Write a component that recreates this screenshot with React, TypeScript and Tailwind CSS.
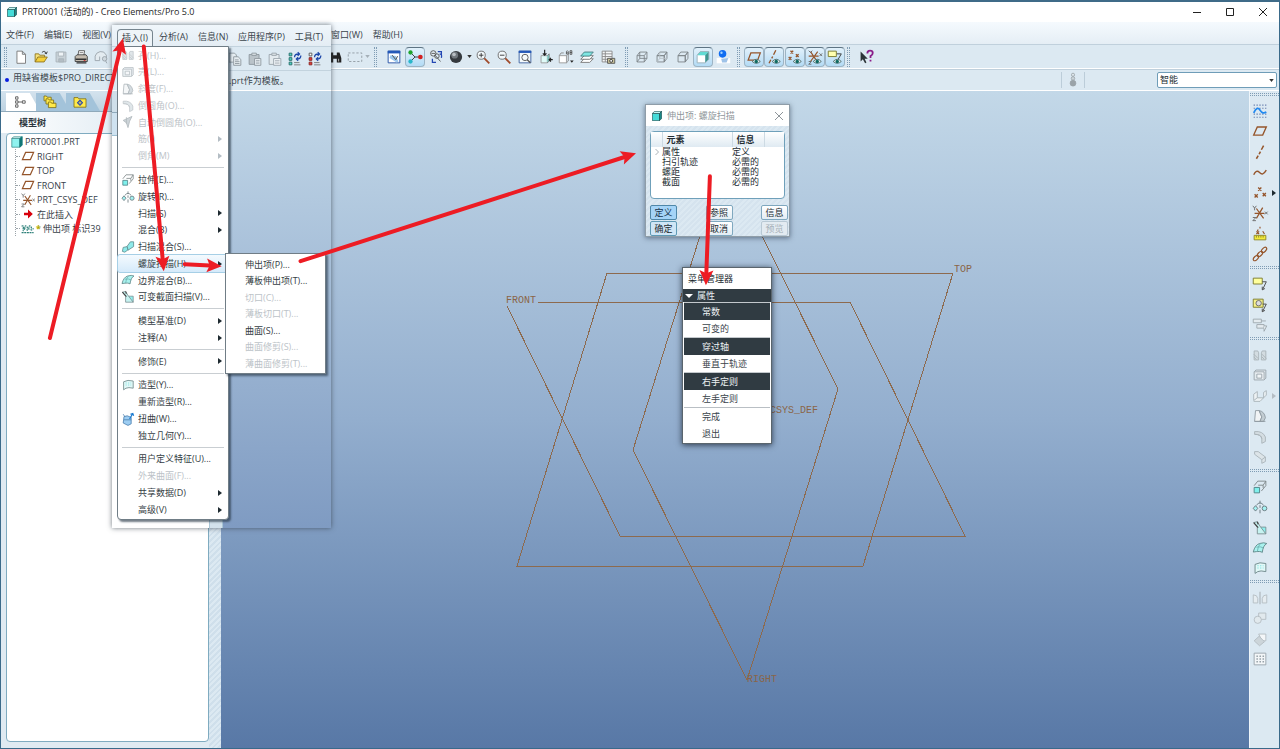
import React from "react";

const FONT = "font-['Open_Sans','Noto_Sans_CJK_SC',sans-serif]";
const B = "#95552b";
const G = "#a9b3ba";
const C = "#7fe0e0";

type IconMap = Record<string, React.ReactNode>;

const eye = (
  <g>
    <path d="M8 15q4.500-5 9 0q-4.500 4-9 0z" fill="#e8f2f2" stroke="#4d6a6a" />
    <circle cx="12.500" cy="15" r="1.900" fill="#0f6a62" />
  </g>
);
const wave = "M3 13C5 9 7 8 9.500 10.500S14 13 17 8";

const cube = (stroke: string, fill = "none", top = "none", side = "none") => (
  <g stroke={stroke} strokeLinejoin="round">
    <path d="M4.500 8.500h8v7h-8z" fill={fill} />
    <path d="M4.500 8.500l3-4h8l-3 4z" fill={top} />
    <path d="M12.500 8.500l3-4v7l-3 4z" fill={side} />
  </g>
);

const ICONS: IconMap = {
  fresh: <path d="M5.500 3.500h6l3.500 3.500v10h-9.500zM11.500 3.500v3.500h3.500" fill="#fff" stroke="#777" />,
  open: (
    <g>
      <path d="M3.500 15.500v-9h4l1 1.500h5.500v3" fill="#f6e27a" stroke="#8d7420" />
      <path d="M3.500 15.500l3-5.500h10.500l-3.500 5.500z" fill="#f4cf3a" stroke="#8d7420" />
      <path d="M11 5q3-3 5 1m1-2l-1 2.500-2-1" stroke="#333" />
    </g>
  ),
  save: (
    <g stroke={G}>
      <path d="M4.500 4.500h11v11h-11z" fill="#c9d2d8" />
      <path d="M7 4.500h6v4.500h-6z" fill="#eef3f6" />
      <path d="M7.500 12h5.500v3.500h-5.500z" fill="#b3bdc4" />
    </g>
  ),
  print: (
    <g>
      <path d="M6.500 9l1-6h6.500l-1 6z" fill="#fff" stroke="#555" />
      <path d="M3.500 9.500l2-2h10l1.500 2v5.500h-13.500z" fill="#c4bcb0" stroke="#3d3d3d" />
      <path d="M4 12.500h12M5 16.500h11" stroke="#333" strokeWidth="1.500" />
      <path d="M8.500 5h4M8 7h4" stroke="#888" />
      <path d="M13 14h2" stroke="#c22" />
    </g>
  ),
  mail: (
    <g stroke="#9aa4ab">
      <path d="M3.500 14v-5q1-4 5.500-5t7 4v4" fill="#e3ebf0" />
      <path d="M3.500 14h5v-4.500" />
      <circle cx="14" cy="12" r="2.500" fill="#cfd8de" />
      <path d="M15 14l1.500 3" />
    </g>
  ),
  copy: (
    <g stroke="#8d979e" fill="#e6edf1">
      <path d="M3.500 3.500h6l2 2v8h-8z" />
      <path d="M8.500 7.500h5l3 3v6.500h-8zM10 11h4M10 13h5M10 15h5" />
    </g>
  ),
  paste: (
    <g stroke="#8d979e">
      <path d="M3.500 5h11v11h-11z" fill="#bac3c9" />
      <path d="M6.500 3.500h5v2.500h-5z" fill="#dce3e7" />
      <path d="M9.500 9.500h7v7.500h-7zM11 12h4M11 14.500h4" fill="#e8eff3" />
    </g>
  ),
  paste2: (
    <g stroke="#9aa4ab">
      <path d="M3.500 5h11v11h-11z" fill="#e3eaee" />
      <path d="M6.500 3.500h5v2.500h-5z" fill="#dce3e7" />
      <path d="M8.500 9.500h8v7.500h-8zM10 12h5M10 14.500h5" fill="#f1f5f8" />
    </g>
  ),
  regen: (
    <g>
      <path d="M3.500 3.500h3v3h-3zM3.500 8.500h3v3h-3zM3.500 13.500h3v3h-3z" fill="#4fd4c4" stroke="#226a66" />
      <path d="M9 14h6M9 16.500h7" stroke="#777" />
      <path d="M9.500 8q0-4 5-3.500m-1.500-2l2 2-2 2M16.500 6q0 4-4.500 4m1.500-2l-2 2 2 2" stroke="#1c46a8" strokeWidth="1.400" />
    </g>
  ),
  regen2: (
    <g>
      <path d="M3.500 3.500h3v3h-3z" fill="#fff" stroke="#555" />
      <path d="M3.500 8.500h3v3h-3zM3.500 13.500h3v3h-3z" fill="#e23b34" stroke="#8a2420" />
      <path d="M9 14h6M9 16.500h7" stroke="#777" />
      <path d="M9.500 8q0-4 5-3.500m-1.500-2l2 2-2 2M16.500 6q0 4-4.500 4m1.500-2l-2 2 2 2" stroke="#1c46a8" strokeWidth="1.400" />
    </g>
  ),
  find: (
    <g fill="#222">
      <path d="M5 5h3v3h4V5h3l2 6v5h-5v-4H8v4H3v-5z" />
      <path d="M5 12v3M14 12v3" stroke="#bbb" />
    </g>
  ),
  marquee: <path d="M2.500 5.500h15v9.500h-15z" stroke="#8f9aa2" strokeDasharray="2.500 2" />,
  repaint: (
    <g>
      <path d="M3.500 3.500h13v13h-13z" fill="#fff" stroke="#1d4ba3" />
      <path d="M3 3h14v3H3z" fill="#2458b8" />
      <path d="M6 8l6 1 3 6-2 1-8-5z" fill="#9cc8ee" />
      <path d="M8 8l4 5 2-4" stroke="#444" />
    </g>
  ),
  spin: (
    <g>
      <path d="M5 5l5 5h6M10 10l-5 5" stroke="#333" />
      <circle cx="5" cy="5" r="2.400" fill="#1fa32c" />
      <circle cx="16" cy="10" r="2.600" fill="#d42020" />
      <circle cx="5" cy="15" r="2.400" fill="#29b7c9" />
    </g>
  ),
  orient: (
    <g stroke="#555">
      <circle cx="7" cy="6" r="3" fill="#e5eef4" />
      <path d="M5 6h4M9 8l6 7" />
      <circle cx="11" cy="9" r="2.500" />
      <path d="M12 4h4v4M6 12v4h4M14 7q3-1 2 4" stroke="#2447b3" strokeWidth="1.400" />
    </g>
  ),
  sphere: (
    <g>
      <circle cx="10" cy="10" r="6.800" fill="#353a3f" />
      <circle cx="8.500" cy="8" r="3.800" fill="#70777d" />
      <circle cx="7.800" cy="7.300" r="2" fill="#b9bfc4" />
    </g>
  ),
  zin: (
    <g>
      <path d="M11 11l6 6" stroke="#a04a2a" strokeWidth="2" />
      <circle cx="8" cy="8" r="4.500" fill="#f2f8fb" stroke="#666" />
      <path d="M5.500 8h5M8 5.500v5" stroke="#333" />
    </g>
  ),
  zout: (
    <g>
      <path d="M11 11l6 6" stroke="#a04a2a" strokeWidth="2" />
      <circle cx="8" cy="8" r="4.500" fill="#f2f8fb" stroke="#666" />
      <path d="M5.500 8h5" stroke="#333" />
    </g>
  ),
  refit: (
    <g>
      <path d="M3.500 3.500h13v13h-13z" fill="#f5fafc" stroke="#3a5f9e" />
      <path d="M3 3h14v2.500H3z" fill="#2458b8" />
      <circle cx="10" cy="10.500" r="3.500" stroke="#555" />
      <path d="M12.500 13l3.500 3.500" stroke="#555" strokeWidth="1.500" />
    </g>
  ),
  reorient: (
    <g>
      <path d="M4.500 8.500h7v8h-7z" fill="#dffaf8" stroke="#999" />
      <path d="M11.500 8.500l2-2v8l-2 2" fill="#7fd9d2" stroke="#777" />
      <path d="M8.500 2v6M6.500 6l2 2 2-2M17.500 13h-4M15.500 11l-2 2 2 2" stroke="#222" strokeWidth="1.300" />
    </g>
  ),
  views: (
    <g>
      <path d="M2.500 8.500h8v8h-8z" fill="#fff" stroke="#999" />
      <path d="M2.500 8.500l2-3h3M10.500 8.500l2-2v8l-2 2" stroke="#888" />
      <path d="M10.500 7V4q1-2 2 0v3M10.500 5.500h2M14.500 3v4h2V5h-2h2V3z" stroke="#555" />
      <path d="M14.500 14h4l-2 2.500z" fill="#222" />
    </g>
  ),
  layers: (
    <g stroke="#777">
      <path d="M3 16l4-4h10l-4 4z" fill="#fff" />
      <path d="M3 12.500l4-4h10l-4 4z" fill="#fff" />
      <path d="M3 9l4-4.500h10L13 9z" fill="#7fe6e2" stroke="#457d80" />
    </g>
  ),
  viewmgr: (
    <g stroke="#888">
      <path d="M3.500 3.500h11v12h-11zM3.500 6.500h11M3.500 9.500h11M3.500 12.500h11M7 3.500v12" fill="#f5f7f8" />
      <path d="M9.500 11.500h8v5.500h-8z" fill="#cbc59b" stroke="#555" />
      <circle cx="13.500" cy="14.300" r="1.600" stroke="#333" fill="#fff" />
    </g>
  ),
  wire: (
    <g stroke="#7d8589">
      <path d="M4.500 8.500h8v7h-8zM7.500 4.500h8v7h-8zM4.500 8.500l3-4M12.500 8.500l3-4M12.500 15.500l3-4M4.500 15.500l3-4" />
    </g>
  ),
  hidden: (
    <g stroke="#7d8589">
      {cube("#7d8589")}
      <path d="M7.500 4.500v7h8M4.500 15.500l3-4" stroke="#b7c0c5" />
    </g>
  ),
  nohidden: cube("#7d8589"),
  shade: (
    <g strokeLinejoin="round">
      <path d="M3.500 8h9v8.500h-9z" fill="#fff" />
      <path d="M3.500 8l3.500-4h9.500l-4 4z" fill="#5fdcd4" />
      <path d="M12.500 8l4-4v8.500l-4 4z" fill="#3f9690" />
      <path d="M3.500 16.500V8L7 4h9.500v8.500l-4 4z" stroke="#9ab0b8" />
    </g>
  ),
  realism: (
    <g>
      <path d="M3 11h15v6H3z" fill="#fff" />
      <path d="M8 12l8-1-2 5H9z" fill="#9fc3e8" />
      <circle cx="9.500" cy="6.500" r="4.200" fill="#0f6cf2" />
      <circle cx="8.300" cy="5.300" r="1.300" fill="#9fd0ff" />
    </g>
  ),
  dplane: (<g><path d="M6.500 5.500h10.500l-3 8H3.500z" stroke={B} strokeWidth="1.400" />{eye}</g>),
  daxis: (<g><path d="M12 2.500l-2.500 5M8.500 9.500l-1 2M6.500 13l-2 4" stroke={B} strokeWidth="1.500" />{eye}</g>),
  dpoint: (<g><path d="M5 3l3 3m0-3l-3 3M11 7l3 3m0-3l-3 3M3 10l3 3m0-3l-3 3" stroke={B} strokeWidth="1.500" />{eye}</g>),
  dcsys: (
    <g>
      <path d="M3 9h11M5 4l8 12M13 4L5 15" stroke={B} strokeWidth="1.300" />
      <path d="M3 3l2 2 2-2M3 15h3l-3 3h3M15 6l3 3m0-3l-3 3" stroke="#666" />
      {eye}
    </g>
  ),
  dnote: (<g><path d="M2.500 3.500h9v6h-9z" fill="#ffffb0" stroke="#77772a" /><path d="M12 6.500h5l-4 7" stroke="#333" />{eye}</g>),
  help: (
    <g>
      <path d="M4 4v11l2.500-2.500L9 17l1.500-1-2-4h3.500z" fill="#2b3438" />
      <path d="M11.500 6q0-3 3-3t3 2.500q0 2-2.500 3.500v2M15 13v2" stroke="#8a1d8a" strokeWidth="2" />
    </g>
  ),
  thermo: (
    <g stroke="#9aa3a8">
      <circle cx="10" cy="3.500" r="2" fill="#dce5ea" />
      <circle cx="10" cy="8" r="2.200" fill="#cbd4d9" />
      <circle cx="10" cy="14" r="3.600" fill="#9aa3a8" />
    </g>
  ),
  sketch: (
    <g>
      <path d="M3 3.500h14M3 7h14M3 13.500h14M3 17h14" stroke="#5069a0" strokeWidth="1.200" strokeDasharray="1.200 2" />
      <path d="M3 12q4-8 7-3t7 2" stroke="#2289f0" strokeWidth="2" />
    </g>
  ),
  plane: <path d="M7 5.500h10l-4 9H3z" stroke={B} strokeWidth="1.500" />,
  axis: <path d="M14 3l-2.500 4.500M10.500 9.500l-1.500 3M8 14l-2 3.500" stroke={B} strokeWidth="1.700" />,
  curve: <path d={wave} stroke={B} strokeWidth="1.600" />,
  points: <path d="M8 4l3.500 3.500m0-3.500l-3.500 3.500M13 10l3.500 3.500m0-3.500l-3.500 3.500M4 11.500l3.500 3.500m0-3.500l-3.500 3.500" stroke={B} strokeWidth="1.500" />,
  csys: (
    <g>
      <path d="M4 10.500h11M6 5l8 11M13 4L6 16" stroke={B} strokeWidth="1.400" />
      <path d="M2 2l2 2.500L6 2M4 4.500V7M2 15h3.500L2 18.500h3.500M15.500 8.500l3 3m0-3l-3 3" stroke="#666" />
    </g>
  ),
  analysis: (
    <g>
      <path d="M10 2v2M8 5l-1 2M6 7l3 3m0-3l-3 3M13 7l2 3" stroke={B} strokeWidth="1.300" />
      <path d="M3.500 11.500h13v5h-13z" fill="#f4ec3c" stroke="#8b8428" />
      <path d="M6 12v2M8.500 12v2M11 12v2M13.500 12v2" stroke="#8b8428" />
    </g>
  ),
  chain: (
    <g stroke={B} strokeWidth="1.300">
      <ellipse cx="5.500" cy="14.500" rx="3.600" ry="2" transform="rotate(-45 5.500 14.500)" />
      <ellipse cx="10" cy="10" rx="3.600" ry="2" transform="rotate(-45 10 10)" />
      <ellipse cx="14.500" cy="5.500" rx="3.600" ry="2" transform="rotate(-45 14.500 5.500)" />
    </g>
  ),
  note: (<g><path d="M2.500 3.500h10v6.500h-10z" fill="#ffff9c" stroke="#77772a" /><path d="M12.500 7.500h4.500l-4 8.500m-.5-3v3.500l3-1.500" stroke="#444" /></g>),
  note2: (
    <g>
      <path d="M2.500 3.500h11v9h-11z" fill="#f5f087" stroke="#77772a" />
      <circle cx="8.500" cy="8" r="3" fill="#ddd" stroke="#666" />
      <path d="M13 9h4l-4 8m-.5-3v3.500l3-1.500" stroke="#444" />
    </g>
  ),
  note3: (<g stroke="#9da7ad" fill="#e4ebef"><path d="M2.500 3.500h9v4h-9zM6.500 9.500h8v4h-8z" /><path d="M11.500 5.500h5M14.500 11h3l-3 6m0-3v3" /></g>),
  hole: (<g stroke="#a9b3b9"><path d="M3.500 5.500h4l1 2v8h-5zM16.500 5.500h-4l-1 2v8h5z" fill="#d3dce1" /><path d="M3 9l5 5M3 12l3 3M12 9l5 5M12 12l3 3" /></g>),
  shell: (<g stroke="#98a3aa"><path d="M3.500 6.500l2-2h11v9l-2 2h-11z" fill="#e3ebef" /><path d="M3.500 6.500h11v9M6.500 9h5.500v4.500h-5.500z" fill="#f1f5f7" /></g>),
  rib: (<g stroke="#a9b3b9"><path d="M3 15l4-3v-7l-4 3zM7 12h7l-4 4H3M14 12l3-3V4l-3 2z" fill="#edf2f4" /></g>),
  draft: (<g stroke="#8f9aa1"><path d="M5 4h4l3 7-2 5H4z" fill="#f1f4f6" /><path d="M9 4q6 1 7 8l-2 4h-4l2-5z" fill="#c3cdd3" /><path d="M4 16h12" /></g>),
  round: (<g stroke="#a9b3b9"><path d="M4 4q9-1 12 6v5l-4 2V12q-1-5-8-5z" fill="#d4dde2" /><path d="M4 7q8 0 8 5" /></g>),
  chamfer: (<g stroke="#a9b3b9"><path d="M4 4h4l8 6v5l-4 2v-4L4 7z" fill="#dce4e8" /><path d="M12 13l4-3" /></g>),
  autoround: (<g stroke="#8f9aa1"><path d="M4 8l11-5-3 6-2 8-2-6z" fill="#b9c3c9" /><path d="M8 4v8" /></g>),
  extrude: (<g><path d="M3.500 10.500h6v6h-6z" fill="#7ff0ec" stroke="#4e8286" /><path d="M3.500 8.500l4-5h9l-3 4.500H8M16.500 3.500v5l-5 6M13.500 8v3" stroke="#7c8587" /></g>),
  revolve: (
    <g stroke="#66757a">
      <path d="M10 3v3M10 8v3M10 13v4" />
      <path d="M5 8.500L7.500 11.500 5 14.500 2.500 11.500z" fill="#a4f2f2" />
      <circle cx="15" cy="11.500" r="2.600" fill="#a4f2f2" />
      <path d="M6 8q4-5 8 0" />
    </g>
  ),
  sweepblend: (<g stroke="#5c8a8d"><path d="M3 15.500l1-5 5-1 1 4-4 3z" fill="#8feaea" /><path d="M9 9l4-5.500h4v6L10 14z" fill="#8feaea" /></g>),
  vss: (<g stroke="#7c8f92"><path d="M8 9l8.500 7.500V9H13z" fill="#8ff0ee" /><path d="M3 4l4-1 3 5 6.500 8.500H7V9z" fill="#c6f3f1" /><path d="M3 4l5 5.500M7 3l1 3" stroke="#444" strokeWidth="1.400" /></g>),
  boundary: (<g stroke="#5c8486"><path d="M2.500 14.500q2-8 7-9.500t8 0q-4 2-5 10-1.500-2-10-.5z" fill="#a9f2ee" /><path d="M6 9q5-1 8 1M10.500 5q-3 3-3.500 9" stroke="#6fb3b3" /></g>),
  style: (<g stroke="#6b8587"><path d="M4.500 16V6q5-3 12-1v9q-6-1.500-9 0z" fill="#e2f9f8" /><path d="M7 7.500h7M7 10h7" stroke={C} strokeDasharray="1.500 1.500" /></g>),
  warp: (<g stroke="#4a7fae"><path d="M5 7l4-1 5 2v8l-4 2-6-3z" fill="#9dcdf2" /><path d="M4 4l2 3M5 11h9" /><path d="M12 10l4-7m-3 1l3-1 1 3" stroke="#1a7ad0" strokeWidth="1.500" /></g>),
  mirror: (<g stroke="#b3bcc2"><path d="M10 3v14" strokeWidth="1.500" /><path d="M2.500 15.500v-9q4.500 0 5 4v5zM17.500 15.500v-9q-4.500 0-5 4v5z" fill="#e5ecf0" /></g>),
  merge: (<g stroke="#b3bcc2" fill="#e1e9ed"><path d="M8.500 4.500h8v7h-8z" /><circle cx="7.500" cy="12" r="4" /></g>),
  trim: (<g stroke="#b3bcc2"><path d="M8.500 4.500h8v7.500h-4z" fill="#f3f6f8" /><path d="M3.500 12l5.500-5 6 6-5.500 4.500z" fill="#ccd5da" /></g>),
  pattern: (<g><path d="M3.500 3.500h13v13h-13z" fill="#f3f6f8" stroke="#98a3aa" /><path d="M6 7h8.500M6 10h8.500M6 13h8.500" stroke="#98a3aa" strokeWidth="1.700" strokeDasharray="1.700 1.700" /></g>),
  cube: (
    <g strokeLinejoin="round">
      <path d="M3.500 6.500h10v10h-10z" fill="#45dbd8" stroke="#1d5456" />
      <path d="M3.500 6.500l3-3h10l-3 3z" fill="#c5f7f4" stroke="#1d5456" />
      <path d="M13.500 6.500l3-3v10l-3 3z" fill="#1c8886" stroke="#1d5456" />
    </g>
  ),
  treecube: (
    <g strokeLinejoin="round">
      <path d="M3.500 5.500h10v11h-10z" fill="#8ff2ef" stroke="#3d8f8f" />
      <path d="M3.500 5.500l2.500-2h10.500l-3 2z" fill="#e3fbfa" stroke="#3d8f8f" />
      <path d="M13.500 5.500l3-2v10.500l-3 2.500z" fill="#177" stroke="#177" />
    </g>
  ),
  treetab: <path d="M4.500 3.500h3v3h-3zM4.500 8.500h3v3h-3zM4.500 13.500h3v3h-3zM13 8.500h3.500v3H13zM7.500 10h5" fill="#fff" stroke="#444" />,
  folders: (
    <g stroke="#7c6c10" fill="#ffe94a">
      <path d="M2.500 8.500v-6h3l1 1.500h5v4.500z" />
      <path d="M5 12.500v-6.500h3l1 1.500h5.500v5z" />
      <path d="M8 17v-7h3l1 1.500h5.500V17z" />
    </g>
  ),
  fav: (<g><path d="M2.500 16.500v-12h5l1 1.500h9v10.500z" fill="#ffe94a" stroke="#7c6c10" /><path d="M10 7l4 4-4 4-4-4z" fill="#1f3fb0" /><path d="M10 9v4M8 11h4" stroke="#ffe94a" /></g>),
  insert: <path d="M5 8.500h5v-4l6 5.500-6 5.500v-4H5z" fill="#d8000c" />,
  helix: <path d="M2 6.500q3-2 2 3t2 0q0-5 2-3t1 4 2 0q0-6 2-4t1 4 3-1M2 14.500h15" stroke="#2b7f78" strokeWidth="1.500" strokeDasharray="2.500 .8" />,
};

function Icon({ name, small }: { name: string; small?: boolean }) {
  return (
    <svg viewBox="0 0 20 20" fill="none" aria-hidden="true" className={small ? "h-4 w-4 shrink-0" : "h-[18px] w-[18px] shrink-0"}>
      {ICONS[name]}
    </svg>
  );
}

function CubeIcon() {
  return (
    <svg viewBox="3 3 14 14" fill="none" aria-hidden="true" className="mx-[3px] h-2.5 w-2.5 shrink-0">
      {ICONS.cube}
    </svg>
  );
}

function Tool({ name, active }: { name: string; active?: boolean }) {
  return (
    <button
      type="button"
      aria-label={name}
      className={
        "flex h-5 w-5 shrink-0 items-center justify-center rounded-sm " +
        (active ? "border border-[#9db4c4] border-t-[#5e7484] bg-linear-to-b from-[#e2f1fb] to-[#b3dbf5]" : "")
      }
    >
      <Icon name={name} />
    </button>
  );
}

function Grip() {
  return <span className="h-5 w-[3px] shrink-0 border-x border-dotted border-[#7f9cb4]" />;
}

function Caret({ dim }: { dim?: boolean }) {
  return (
    <svg viewBox="0 0 6 4" className="h-[3px] w-[5px] shrink-0" aria-hidden="true">
      <path d="M0 0h6L3 4z" fill={dim ? "#a4afb7" : "#333"} />
    </svg>
  );
}

function SideCaret({ dim }: { dim?: boolean }) {
  return (
    <svg viewBox="0 0 4 6" className="h-1.5 w-1 shrink-0" aria-hidden="true">
      <path d="M0 0v6l4-3z" fill={dim ? "#b4bdc4" : "#1e2a30"} />
    </svg>
  );
}

const topGroups = {
  view1: ["repaint", "*spin", "orient", "sphere", "|", "zin", "zout", "refit", "reorient", "views", "layers", "viewmgr"],
  model: ["wire", "hidden", "nohidden", "*shade", "realism"],
  datum: ["*dplane", "*daxis", "*dpoint", "*dcsys", "*dnote"],
};

function Tools({ items }: { items: string[] }) {
  return (
    <>
      {items.map((n, i) =>
        n === "|" ? <Caret key={i} /> : <Tool key={i} name={n.replace("*", "")} active={n.startsWith("*")} />
      )}
    </>
  );
}

type Row = { label: string; icon?: string; dim?: boolean; sub?: boolean; hot?: boolean } | null;

const menuRows: Row[] = [
  { label: "孔(H)...", icon: "hole", dim: true },
  { label: "壳(L)...", icon: "shell", dim: true },
  { label: "斜度(F)...", icon: "draft", dim: true },
  { label: "倒圆角(O)...", icon: "round", dim: true },
  { label: "自动倒圆角(O)...", icon: "autoround", dim: true },
  { label: "筋(I)", dim: true, sub: true },
  { label: "倒角(M)", dim: true, sub: true },
  null,
  { label: "拉伸(E)...", icon: "extrude" },
  { label: "旋转(R)...", icon: "revolve" },
  { label: "扫描(S)", sub: true },
  { label: "混合(B)", sub: true },
  { label: "扫描混合(S)...", icon: "sweepblend" },
  { label: "螺旋扫描(H)", sub: true, hot: true },
  { label: "边界混合(B)...", icon: "boundary" },
  { label: "可变截面扫描(V)...", icon: "vss" },
  null,
  { label: "模型基准(D)", sub: true },
  { label: "注释(A)", sub: true },
  null,
  { label: "修饰(E)", sub: true },
  null,
  { label: "造型(Y)...", icon: "style" },
  { label: "重新造型(R)..." },
  { label: "扭曲(W)...", icon: "warp" },
  { label: "独立几何(Y)..." },
  null,
  { label: "用户定义特征(U)..." },
  { label: "外来曲面(F)...", dim: true },
  { label: "共享数据(D)", sub: true },
  { label: "高级(V)", sub: true },
];

const subRows: { label: string; dim?: boolean }[] = [
  { label: "伸出项(P)..." },
  { label: "薄板伸出项(T)..." },
  { label: "切口(C)...", dim: true },
  { label: "薄板切口(T)...", dim: true },
  { label: "曲面(S)..." },
  { label: "曲面修剪(S)...", dim: true },
  { label: "薄曲面修剪(T)...", dim: true },
];

function InsertMenu() {
  return (
    <div className="absolute top-[21px] left-[5px] h-[474px] w-28 rounded-b border border-[#707d86] bg-white pb-px shadow-[2px_2px_2px_rgba(40,55,70,0.65)]">
      <ul className="flex h-full flex-col">
        {menuRows.map((r, i) =>
          r === null ? (
            <li key={i} className="flex h-[7px] items-center px-1">
              <hr className="w-full border-[#c9ced2]" />
            </li>
          ) : (
            <li key={i} className="min-h-0 flex-1">
              <button
                type="button"
                disabled={r.dim}
                className={
                  "flex h-full w-full items-center pr-1.5 pl-0.5 text-left text-[9px] whitespace-nowrap " +
                  (r.hot ? "rounded-xs bg-linear-to-b from-[#f4fafe] to-[#d5eafa] outline outline-[#a6cfe6] " : "") +
                  (r.dim ? "text-[#bcc3c8]" : "text-[#343d44]")
                }
              >
                <span className={"flex w-[18px] shrink-0 " + (r.dim ? "opacity-70" : "")}>{r.icon && <Icon name={r.icon} small />}</span>
                <span className="flex-1">{r.label}</span>
                {r.sub && <SideCaret dim={r.dim} />}
              </button>
            </li>
          )
        )}
      </ul>
      <ul className="absolute top-[206px] left-[107px] flex h-[121px] w-[101px] flex-col border border-[#707d86] bg-white pt-0.5 pb-px shadow-[2px_2px_2px_rgba(40,55,70,0.65)]">
        {subRows.map((r) => (
          <li key={r.label} className="min-h-0 flex-1">
            <button
              type="button"
              disabled={r.dim}
              className={"flex h-full w-full items-center pl-[19px] text-[9px] whitespace-nowrap " + (r.dim ? "text-[#bcc3c8]" : "text-[#343d44]")}
            >
              {r.label}
            </button>
          </li>
        ))}
      </ul>
    </div>
  );
}

function MenuSnippet() {
  return (
    <section className="absolute top-[25px] left-28 flex h-[503px] w-[219px] flex-col bg-white shadow-[0_0_5px_rgba(50,60,70,0.7)]">
      <nav className="flex h-[21px] items-center gap-[10px] bg-linear-to-b from-[#f0f6fb] to-[#e4edf4] pt-0.5 pl-[5px] text-[9px] whitespace-nowrap text-[#3a444c]">
        <button type="button" className="h-[17px] w-9 self-end rounded-t border border-b-0 border-[#76858f] bg-[#eef4f8]">插入(I)</button>
        <button type="button" className="-ml-1">分析(A)</button>
        <button type="button">信息(N)</button>
        <button type="button">应用程序(P)</button>
        <button type="button">工具(T)</button>
      </nav>
      <div className="flex h-6 items-center justify-end border-t border-[#c3d3de] bg-[#dce9f2] pr-1.5">
        <Tools items={["copy", "paste", "paste2", "regen", "regen2"]} />
      </div>
      <div className="flex h-[21px] items-center border-y border-t-[#c3d3de] border-b-white bg-[#dce9f2] pl-[117px] text-[9px] text-[#3a444c]">.prt作为模板。</div>
      <div className="flex min-h-0 flex-1">
        <div className="flex w-[97px] flex-col">
          <div className="h-[22px] border-b border-[#8fa9ba] bg-[#cfdfea]" />
          <div className="h-[23px] border-b border-[#9dc0d2] bg-[#cfe2f0]" />
        </div>
        <div className="w-[14px] border-x border-[#a9c6d6] bg-[#d3e2ec]" />
        <div className="flex-1 bg-linear-to-b from-[#c3d8e8] to-[#7f9bc2]" />
      </div>
      <InsertMenu />
    </section>
  );
}

const tree = [
  ["plane", "RIGHT"],
  ["plane", "TOP"],
  ["plane", "FRONT"],
  ["csys", "PRT_CSYS_DEF"],
  ["insert", "在此插入"],
  ["helix", "伸出项 标识39"],
];

function ModelTree() {
  const tab = "flex h-[18px] w-[34px] items-center justify-center [clip-path:polygon(0_0,70%_0,100%_100%,0_100%)] pr-1.5 ";
  return (
    <aside className="flex w-[208px] shrink-0 flex-col bg-[#dfeaf2]">
      <div className="flex h-[21px] items-end border-b border-[#8fa9ba] bg-linear-to-b from-[#d4e3ee] to-[#bdd2e1] pl-[5px]">
        <button type="button" aria-label="模型树" className={tab + "bg-white"}><Icon name="treetab" small /></button>
        <button type="button" aria-label="文件夹" className={tab + "-ml-1 bg-[#a3c3da]"}><Icon name="folders" small /></button>
        <button type="button" aria-label="收藏夹" className={tab + "-ml-1 bg-[#a3c3da]"}><Icon name="fav" small /></button>
      </div>
      <h2 className="flex h-[21px] items-center bg-linear-to-r from-white to-[#cfe0ec] pl-[18px] text-[9px] font-bold text-[#2c363d]">模型树</h2>
      <div className="mb-1.5 ml-[5px] flex-1 rounded border border-[#7fabc0] bg-white pl-0.5">
        <div className="flex h-[102px] flex-col text-[9px] whitespace-nowrap text-[#38424a]">
          <div className="flex min-h-0 flex-1 items-center"><Icon name="treecube" small />PRT0001.PRT</div>
          <ul className="ml-1.5 flex h-[87px] flex-col border-l border-dotted border-[#9aa3a9]">
            {tree.map(([icon, label]) => (
              <li key={label} className="flex min-h-0 flex-1 items-center">
                <span className="w-1 border-t border-dotted border-[#9aa3a9]" />
                <Icon name={icon} small />
                {icon === "helix" && <span className="w-1.5 text-[9px] font-bold text-[#b0a800]">*</span>}
                <span className="pl-px">{label}</span>
              </li>
            ))}
          </ul>
        </div>
      </div>
    </aside>
  );
}

function Viewport() {
  return (
    <main className="min-w-0 flex-1 bg-linear-to-b from-[#c3d8e8] via-[#93aece] to-[#5878a6]">
      <svg width="1028" height="657" viewBox="221 91 1028 657" fill="none" stroke="#8d6a4e" shapeRendering="crispEdges" className="block max-w-full">
        <path d="M607 273H953L863 566H517z" />
        <path d="M538 302H850L965 536H620L507 306" />
        <path d="M633 450L747 680L838 389L724 159z" />
        <g fill="#8a6547" stroke="none" fontSize="10" fontFamily="'Liberation Mono', monospace" shapeRendering="auto">
          <text x="506" y="303">FRONT</text>
          <text x="954" y="272">TOP</text>
          <text x="747" y="682">RIGHT</text>
          <text x="746" y="413">PRT_CSYS_DEF</text>
        </g>
      </svg>
    </main>
  );
}

const sideGroups: { cls: string; items: string[] }[] = [
  { cls: "h-[163px]", items: ["sketch", "plane", "axis", "curve", "points>", "csys", "analysis", "chain"] },
  { cls: "h-[61px]", items: ["note", "note2", "note3"] },
  { cls: "h-[122px]", items: ["hole", "shell", "rib>", "draft", "round", "chamfer"] },
  { cls: "h-[101px]", items: ["extrude", "revolve", "vss", "boundary", "style"] },
  { cls: "h-[81px]", items: ["mirror", "merge", "trim", "pattern"] },
];

function SideBar() {
  return (
    <aside className="w-[30px] shrink-0 border-l border-[#eef5fa] bg-[#dce9f2]">
      {sideGroups.map((g, i) => (
        <div key={i}>
          <div className="flex h-2.5 items-center pb-1">
            <span className="h-[3px] w-full border-y border-dotted border-[#7f9cb4]" />
          </div>
          <div className={"flex flex-col justify-between " + g.cls}>
            {g.items.map((n) => (
              <div key={n} className="flex items-center">
                <Tool name={n.replace(">", "")} />
                {n.endsWith(">") && <span className="ml-0.5 flex"><SideCaret dim={n.startsWith("rib")} /></span>}
              </div>
            ))}
          </div>
        </div>
      ))}
    </aside>
  );
}

const elements = [
  ["属性", "定义"],
  ["扫引轨迹", "必需的"],
  ["螺距", "必需的"],
  ["截面", "必需的"],
];

function ElementDialog() {
  const btn = "h-[15px] w-[27px] rounded-xs border text-[9px] leading-3 ";
  const plain = btn + "border-[#7fa8bf] bg-linear-to-b from-white to-[#e3edf4] text-[#222b31]";
  return (
    <section className="absolute top-[104px] left-[645px] w-[145px] border border-[#8f9da8] bg-[repeating-linear-gradient(135deg,#dce9f2_0_2px,#d5e3ee_2px_4px)] shadow-[0_1px_5px_rgba(40,55,75,0.6)]">
      <header className="flex h-[21px] items-center bg-white pr-1.5 pl-[3px] text-[9px] text-[#8e959a]">
        <CubeIcon />
        <span className="flex-1 pl-0.5">伸出项: 螺旋扫描</span>
        <button type="button" aria-label="关闭" className="flex">
          <svg viewBox="0 0 8 8" className="h-2 w-2" stroke="#8e959a"><path d="M0 0l8 8M8 0L0 8" /></svg>
        </button>
      </header>
      <div className="mx-1 mt-[5px] h-[68px] rounded border border-[#6fa0ba] bg-white">
        <table className="w-full table-fixed text-left text-[9px] text-[#232c32]">
          <thead>
            <tr className="h-[15px] bg-linear-to-b from-white to-[#dfeaf2] leading-[13px]">
              <th className="w-[11px] border-r border-[#cddae3]" />
              <th className="w-[70px] border-r border-[#cddae3] pl-1">元素</th>
              <th className="w-8 border-r border-[#cddae3] pl-1">信息</th>
              <th />
            </tr>
          </thead>
          <tbody>
            {elements.map(([a, b], i) => (
              <tr key={a} className="h-[10px] leading-[10px]">
                <td className="pl-1">
                  {i === 0 && <svg viewBox="0 0 4 6" className="h-1.5 w-1" fill="none" stroke="#aab2b8"><path d="M.5 0l3 3-3 3" /></svg>}
                </td>
                <td>{a}</td>
                <td>{b}</td>
                <td />
              </tr>
            ))}
          </tbody>
        </table>
      </div>
      <div className="mt-1.5 grid grid-cols-[auto_auto_auto] justify-between gap-y-px pr-px pl-1">
        <button type="button" className={btn + "border-[#4f87a8] bg-[#a5d4f7] text-[#16324a]"}>定义</button>
        <button type="button" className={plain}>参照</button>
        <button type="button" className={plain}>信息</button>
        <button type="button" className={btn + "border-[#5f9ab5] bg-[#cfe6f6] text-[#222b31]"}>确定</button>
        <button type="button" className={plain}>取消</button>
        <button type="button" disabled className={btn + "border-[#b9c9d4] bg-[#e3ebf1] text-[#a5b0b8]"}>预览</button>
      </div>
    </section>
  );
}

const manager: { label: string; on?: boolean; rule?: boolean }[] = [
  { label: "常数", on: true },
  { label: "可变的" },
  { label: "穿过轴", on: true },
  { label: "垂直于轨迹" },
  { label: "右手定则", on: true },
  { label: "左手定则" },
  { label: "完成", rule: true },
  { label: "退出" },
];

function MenuManager() {
  return (
    <section className="absolute top-[267px] left-[682px] w-[90px] border border-[#5a656d] bg-white pb-px text-[9px] shadow-[0_1px_6px_rgba(20,30,45,0.8)]">
      <h2 className="flex h-[21px] items-center pl-[5px] text-[#20282e]">菜单管理器</h2>
      <h3 className="flex h-[13px] items-center gap-1 bg-[#303b42] pl-0.5 text-[#e5eaee]">
        <svg viewBox="0 0 8 4" className="h-1 w-2" fill="#fff"><path d="M0 0h8L4 4z" /></svg>
        属性
      </h3>
      <ul className="px-px">
        {manager.map((m) => (
          <li key={m.label} className={m.rule ? "border-t border-[#b9bfc4]" : m.on ? "border-t border-[#c3c8cc]" : ""}>
            <button
              type="button"
              className={"flex h-[17px] w-full items-center pl-[18px] " + (m.on ? "bg-[#303b42] text-[#eef2f4]" : "text-[#3a444b]")}
            >
              {m.label}
            </button>
          </li>
        ))}
      </ul>
    </section>
  );
}

const arrows = [
  [50, 338, 123, 38],
  [144, 46, 164, 271],
  [185, 264, 222, 266],
  [301, 261, 637, 153],
  [711, 176, 707, 285],
];

function Arrows() {
  return (
    <svg width="1280" height="749" viewBox="0 0 1280 749" className="pointer-events-none absolute top-0 left-0 max-w-full" fill="#ed1c24" stroke="#ed1c24" aria-hidden="true">
      {arrows.map(([x1, y1, x2, y2], i) => {
        const d = Math.hypot(x2 - x1, y2 - y1);
        const ux = (x2 - x1) / d;
        const uy = (y2 - y1) / d;
        const bx = x2 - ux * 15;
        const by = y2 - uy * 15;
        const ix = x2 - ux * 12;
        const iy = y2 - uy * 12;
        return (
          <g key={i}>
            <line x1={x1} y1={y1} x2={ix} y2={iy} strokeWidth="4" strokeLinecap="round" />
            <polygon stroke="none" points={`${x2},${y2} ${bx - uy * 7},${by + ux * 7} ${ix},${iy} ${bx + uy * 7},${by - ux * 7}`} />
          </g>
        );
      })}
    </svg>
  );
}

export default function App() {
  return (
    <div className={"relative flex min-h-screen flex-col overflow-hidden border border-t-2 border-[#3a6a8a] border-t-[#3f6b88] bg-[#dce9f2] " + FONT}>
      <header className="flex h-5 items-center bg-white pl-[3px] text-[9px] text-[#1f1f1f]">
        <CubeIcon />
        <h1 className="flex-1 pl-0.5 font-normal">PRT0001 (活动的) - Creo Elements/Pro 5.0</h1>
        <div className="flex items-center gap-[25px] pr-3">
          <button type="button" aria-label="最小化" className="flex"><svg viewBox="0 0 8 8" className="h-2 w-2" stroke="#222"><path d="M0 4.500h8" /></svg></button>
          <button type="button" aria-label="最大化" className="flex"><svg viewBox="0 0 8 8" className="h-2 w-2" fill="none" stroke="#222"><path d="M.5.500h7v7h-7z" /></svg></button>
          <button type="button" aria-label="关闭" className="flex"><svg viewBox="0 0 8 8" className="h-2 w-2" stroke="#222"><path d="M0 0l8 8M8 0L0 8" /></svg></button>
        </div>
      </header>
      <nav className="flex h-[22px] items-center bg-linear-to-b from-[#f5fafe] to-[#e5eef5] pt-1 pb-px pl-[5px] text-[9px] whitespace-nowrap text-[#3a444c]">
        <div className="flex w-[325px] gap-[10px]">
          <button type="button">文件(F)</button>
          <button type="button">编辑(E)</button>
          <button type="button">视图(V)</button>
        </div>
        <div className="flex gap-[10px]">
          <button type="button">窗口(W)</button>
          <button type="button">帮助(H)</button>
        </div>
      </nav>
      <div className="flex h-[25px] items-center border-y border-t-[#c0d0dc] border-b-white">
        <div className="flex w-[324px] items-center pl-[3px]">
          <Grip />
          <span className="w-1" />
          <Tools items={["fresh", "open", "save", "print", "mail"]} />
        </div>
        <div className="flex w-[49px] items-center">
          <Tools items={["find", "marquee"]} />
          <Caret dim />
        </div>
        <Grip />
        <div className="mx-[7px] flex w-[234px] items-center justify-between">
          <Tools items={topGroups.view1} />
        </div>
        <Grip />
        <div className="ml-1 flex w-[101px] items-center justify-between">
          <Tools items={topGroups.model} />
        </div>
        <span className="w-1" />
        <Grip />
        <div className="ml-1 flex w-[101px] items-center justify-between">
          <Tools items={topGroups.datum} />
        </div>
        <span className="w-0.5" />
        <Grip />
        <span className="w-1.5" />
        <Tool name="help" />
      </div>
      <div className="flex h-[22px] items-center border-y border-t-[#c0d0dc] border-b-white pr-0.5 text-[9px] text-[#3a444c]">
        <span className="mr-1 ml-1 h-1 w-1 rounded-full bg-[#0a1ee0]" />
        <p className="pb-1 whitespace-nowrap">用缺省模板$PRO_DIRECTORY</p>
        <div className="mr-[72px] ml-auto flex h-4 w-6 items-center justify-center border-x border-[#bccdd9]"><Icon name="thermo" small /></div>
        <label className="relative flex items-center">
          <select aria-label="过滤器" className="h-4 w-[120px] appearance-none rounded-xs border border-[#6f9db8] bg-white pl-0.5 text-[9px] leading-3 text-[#222b31]">
            <option>智能</option>
          </select>
          <span className="pointer-events-none absolute right-[3px] flex"><Caret /></span>
        </label>
      </div>
      <div className="flex flex-1">
        <ModelTree />
        <div className="w-3 shrink-0 bg-[repeating-linear-gradient(135deg,#dce9f2_0_2px,#cfdfeb_2px_4px)]" />
        <Viewport />
        <SideBar />
      </div>
      <div className="absolute -top-0.5 -left-px h-full w-full">
        <MenuSnippet />
        <ElementDialog />
        <MenuManager />
        <Arrows />
      </div>
    </div>
  );
}
